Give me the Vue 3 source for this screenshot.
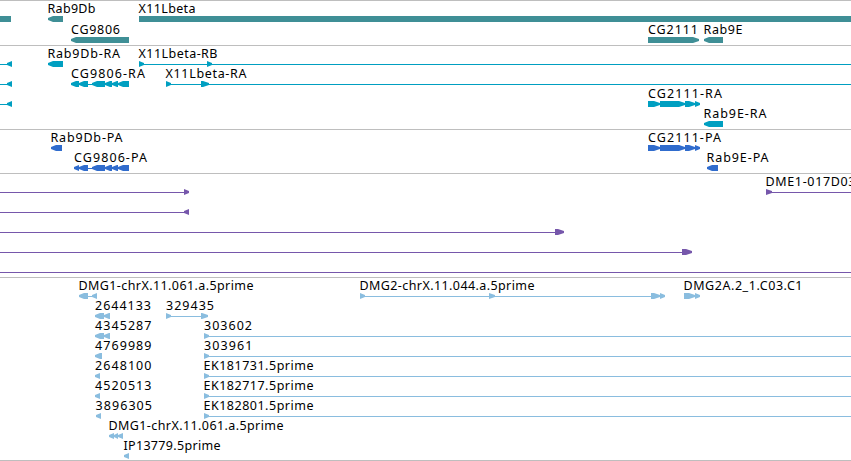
<template>
  <div class="browser">
    <section v-for="track in tracks" :key="track.name" class="track" :class="track.name">
      <svg width="851" :height="track.height">
        <g v-for="(feature, i) in track.features" :key="i">
          <text
            v-if="feature.label"
            :x="feature.at"
            :y="feature.y - 3"
            :textLength="feature.width"
          >{{ feature.label }}</text>
          <rect
            v-if="feature.line"
            :x="feature.line[0]"
            :y="feature.y + 3"
            :width="feature.line[1] - feature.line[0]"
            height="1"
          />
          <path v-for="(block, n) in feature.blocks" :key="n" :d="shape(block, feature.y)" />
        </g>
      </svg>
    </section>
  </div>
</template>

<script setup>
// y is the top of the 6px glyph inside the track, blocks are [start, end, direction]
const row = (y, label, at, width, blocks = [], line = null) => ({
  y,
  label,
  at,
  width,
  blocks,
  line,
});

const left = (...spans) => spans.map(([a, b]) => [a, b, "<"]);
const right = (...spans) => spans.map(([a, b]) => [a, b, ">"]);

const shape = ([start, end, dir], y) => {
  const tip = Math.min(dir === "<" ? 5 : 6, end - start);
  if (dir === "<") {
    return `M${end} ${y}V${y + 6}H${start + tip}L${start} ${y + 4}V${y + 2}L${start + tip} ${y}Z`;
  }
  if (dir === ">") {
    return `M${start} ${y}V${y + 6}H${end - tip}L${end} ${y + 4}V${y + 2}L${end - tip} ${y}Z`;
  }
  return `M${start} ${y}H${end}V${y + 6}H${start}Z`;
};

const cgExons = [[79, 88], [92, 105], [105, 112], [112, 118], [118, 129]];
const cg2111Exons = [[648, 660], [660, 685], [685, 695], [695, 700]];

const tracks = [
  {
    name: "genes",
    height: 44,
    features: [
      row(15, "", 0, 0, [[0, 11]]),
      row(15, "Rab9Db", 47.5, 48, left([48, 63])),
      row(15, "X11Lbeta", 138.5, 57, [[139, 851]]),
      row(36, "CG9806", 71, 49, left([71, 129])),
      row(36, "CG2111", 648, 50, right([648, 699])),
      row(36, "Rab9E", 703.5, 39, left([704, 723])),
    ],
  },
  {
    name: "transcripts",
    height: 83,
    features: [
      row(15, "", 0, 0, left([7, 12]), [0, 12]),
      row(15, "Rab9Db-RA", 47.5, 72.5, left([48, 63])),
      row(15, "X11Lbeta-RB", 138.5, 79, right([139, 144], [207, 212]), [139, 851]),
      row(35, "", 0, 0, left([7, 12]), [0, 12]),
      row(35, "CG9806-RA", 71, 74, left([71, 79], ...cgExons), [71, 129]),
      row(35, "X11Lbeta-RA", 165.5, 81, right([166, 171], [201, 209]), [166, 851]),
      row(55, "", 0, 0, left([7, 12]), [0, 12]),
      row(55, "CG2111-RA", 648, 74, right(...cg2111Exons), [648, 700]),
      row(75, "Rab9E-RA", 703.5, 63, left([704, 723])),
    ],
  },
  {
    name: "proteins",
    height: 43,
    features: [
      row(15, "Rab9Db-PA", 50.5, 72, left([51, 62])),
      row(15, "CG2111-PA", 648, 73, right(...cg2111Exons), [648, 700]),
      row(35, "CG9806-PA", 74, 73, left([74, 79], ...cgExons), [74, 129]),
      row(35, "Rab9E-PA", 706.5, 62, left([707, 718])),
    ],
  },
  {
    name: "clones",
    height: 103,
    features: [
      row(15, "", 0, 0, right([184, 189]), [0, 189]),
      row(15, "DME1-017D03", 765.5, 90, right([766, 772]), [766, 851]),
      row(35, "", 0, 0, left([184, 189]), [0, 189]),
      row(55, "", 0, 0, right([555, 564]), [0, 564]),
      row(75, "", 0, 0, right([682, 692]), [0, 692]),
      row(95, "", 0, 0, [], [0, 851]),
    ],
  },
  {
    name: "ests",
    height: 182,
    features: [
      row(15, "DMG1-chrX.11.061.a.5prime", 78.5, 175, left([79, 88], [92, 97]), [79, 97]),
      row(15, "DMG2-chrX.11.044.a.5prime", 359.5, 175, right([360, 365], [489, 495], [651, 660], [660, 665]), [360, 665]),
      row(15, "DMG2A.2_1.C03.C1", 683.5, 119, right([684, 695], [695, 700]), [684, 700]),
      row(35, "2644133", 95, 56, left([95, 104], [104, 110]), [95, 110]),
      row(35, "329435", 166, 48, right([166, 171], [201, 208]), [166, 208]),
      row(55, "4345287", 95, 56.5, left([95, 104], [104, 110]), [95, 110]),
      row(55, "303602", 204, 48, right([204, 209]), [204, 851]),
      row(75, "4769989", 95, 56.5, left([95, 102])),
      row(75, "303961", 204, 48.5, right([204, 209]), [204, 851]),
      row(95, "2648100", 95, 56.5, left([95, 100])),
      row(95, "EK181731.5prime", 203.5, 110, right([204, 209]), [204, 851]),
      row(115, "4520513", 95, 56.5, left([95, 100])),
      row(115, "EK182717.5prime", 203.5, 110, right([204, 209]), [204, 851]),
      row(135, "3896305", 95.5, 56.5, left([96, 101])),
      row(135, "EK182801.5prime", 203.5, 110, right([204, 209]), [204, 851]),
      row(155, "DMG1-chrX.11.061.a.5prime", 108.5, 175, left([109, 114], [114, 118], [118, 123]), [109, 123]),
      row(175, "IP13779.5prime", 123.5, 97, left([124, 129])),
    ],
  },
];
</script>

<style>
body {
  margin: 0;
  background: #fff;
}
</style>

<style scoped>
.browser {
  width: 851px;
  border-bottom: 1px solid #bebebe;
  overflow: hidden;
}

.track {
  border-top: 1px solid #bebebe;
}

.track svg {
  display: block;
}

text {
  font-family: "Noto Sans", "DejaVu Sans", sans-serif;
  font-size: 12.5px;
  fill: #000;
}

.genes {
  fill: #3f8f96;
}

.transcripts {
  fill: #009fc1;
}

.proteins {
  fill: #306ccd;
}

.clones {
  fill: #7657ab;
}

.ests {
  fill: #8abddf;
}
</style>
